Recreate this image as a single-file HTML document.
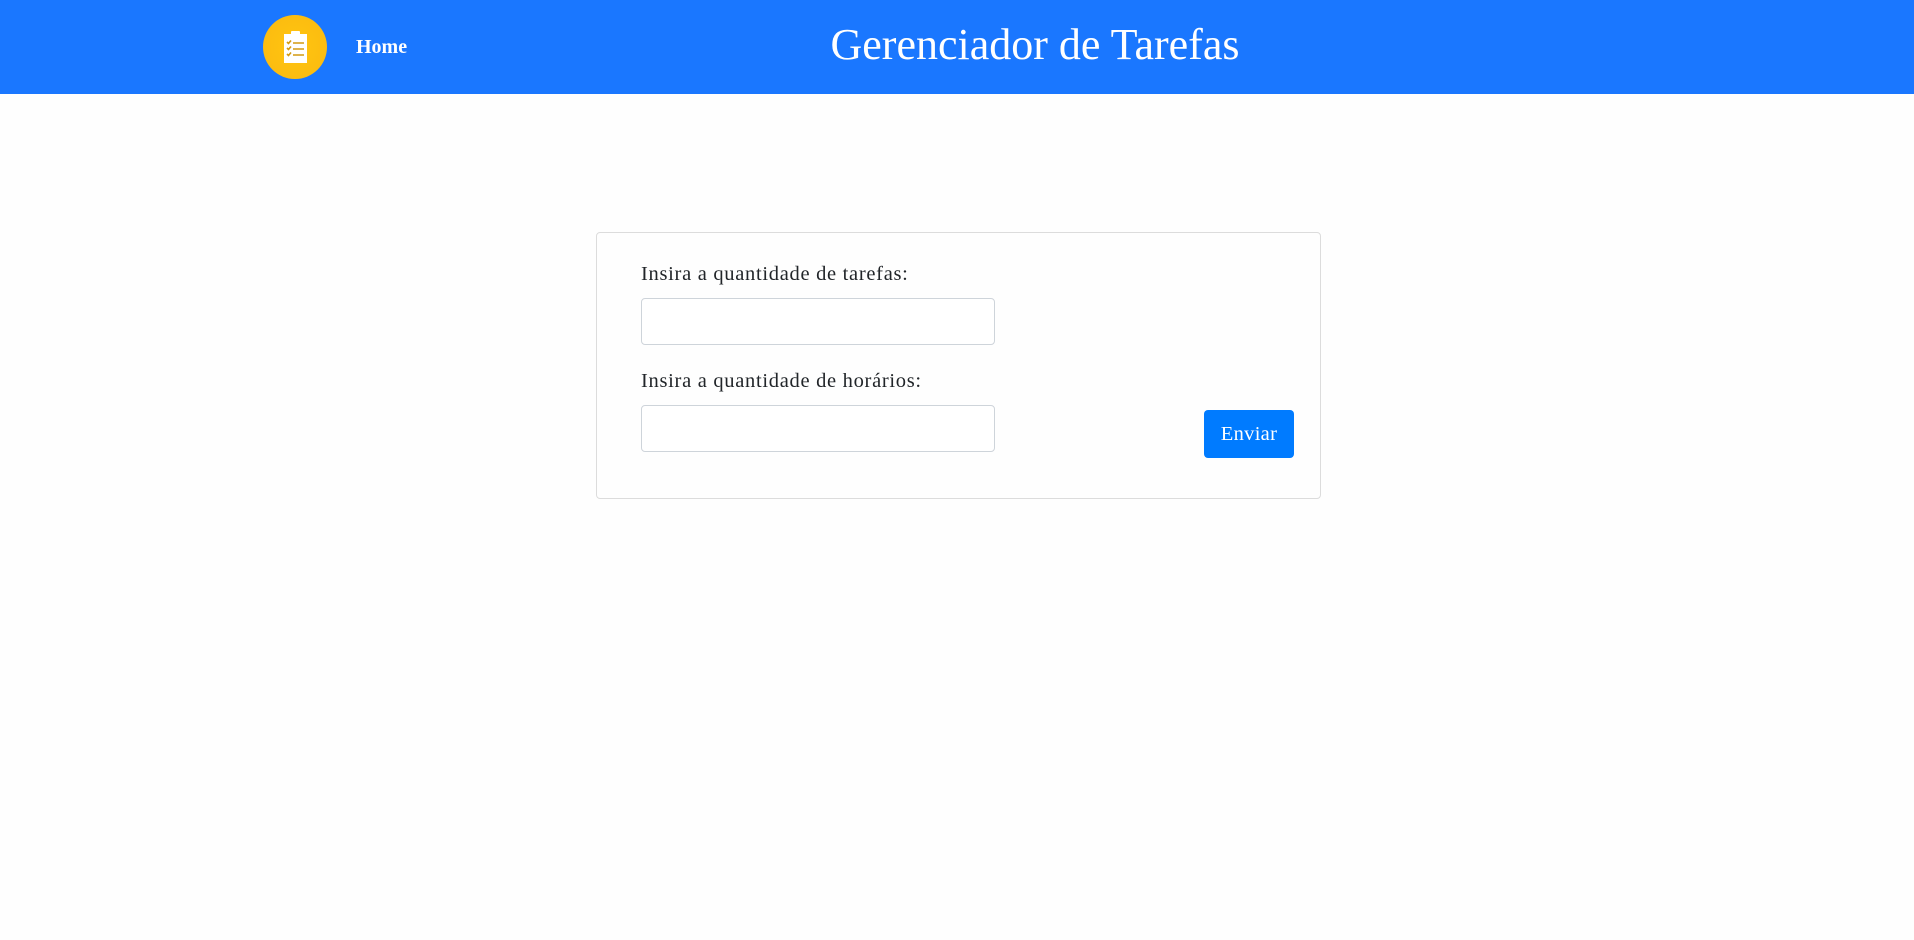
<!DOCTYPE html>
<html><head><meta charset="utf-8"><style>
*{box-sizing:border-box;margin:0;padding:0}
body{width:1914px;height:940px;background:#fefefe;font-family:"Liberation Serif",serif;color:#212529;position:relative;overflow:hidden}
.hdr{position:absolute;left:0;top:0;width:1914px;height:94px;background:#1a77ff}
.logo{position:absolute;left:263px;top:15px;width:64px;height:64px;border-radius:50%;background:radial-gradient(circle,#ffc510 0%,#fbb910 100%)}
.home{position:absolute;left:356px;top:36px;font-size:20px;font-weight:bold;color:#fff}
.title{position:absolute;left:0;width:2070px;text-align:center;top:19px;font-size:44px;color:#fff}
.card{position:absolute;left:596px;top:232px;width:725px;height:267px;border:1px solid #dcdcdc;border-radius:4px}
.lbl{position:absolute;left:641px;font-size:20.5px;letter-spacing:0.7px}
.inp{position:absolute;left:641px;width:354px;height:47px;border:1px solid #ced4da;border-radius:4px;background:#fff}
.btn{position:absolute;left:1204px;top:410px;width:90px;height:48px;background:#007bff;border-radius:4px;color:#fff;font-size:20.5px;letter-spacing:0.3px;text-align:center;line-height:48px}
</style></head><body>
<div class="hdr">
<div class="logo"><svg width="64" height="64" viewBox="0 0 64 64"><rect x="21" y="19" width="23" height="29" fill="#fff"/><rect x="28" y="16" width="9" height="5" rx="1" fill="#fff"/><g stroke="#d39a10" stroke-width="1.6" fill="none"><path d="M24 27l1.5 1.5 2.5-3M24 33l1.5 1.5 2.5-3M24 39l1.5 1.5 2.5-3"/><path d="M30 28h11M30 34h11M30 40h11"/></g></svg></div>
<div class="home">Home</div>
<div class="title">Gerenciador de Tarefas</div>
</div>
<div class="card"></div>
<div class="lbl" style="top:263px">Insira a quantidade de tarefas:</div>
<div class="inp" style="top:298px"></div>
<div class="lbl" style="top:370px">Insira a quantidade de horários:</div>
<div class="inp" style="top:405px"></div>
<div class="btn">Enviar</div>
</body></html>
